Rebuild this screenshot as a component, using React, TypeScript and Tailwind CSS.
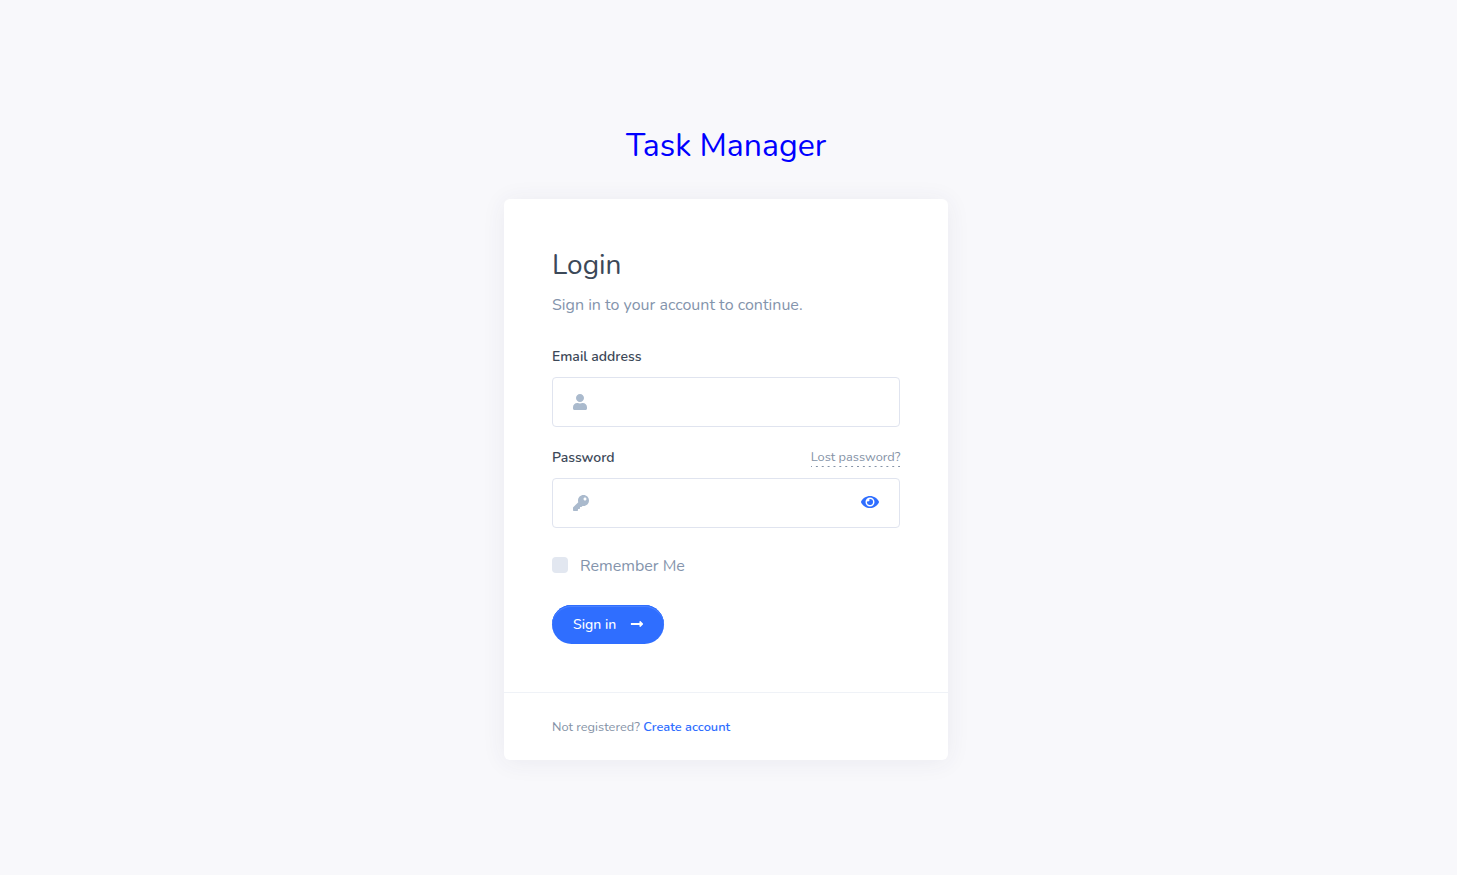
import React from "react";
import { FaUser, FaKey, FaEye, FaLongArrowAltRight } from "react-icons/fa";

export default function App() {
  return (
    <main className="flex min-h-[875px] flex-col items-center bg-[#f8f8fb] pr-[5px] pt-[120px] font-['Nunito','Lato',sans-serif] text-[#8492a6]">
      <h1 className="mt-px flex h-[50px] w-[200px] items-center whitespace-nowrap text-[32px] leading-[50px] text-[#0000ff]">
        Task Manager
      </h1>
      <section className="mt-[28px] w-[444px] rounded-md bg-white shadow-[0_2px_25px_rgba(50,50,100,0.07)]">
        <form className="flex h-[493px] flex-col px-12 pt-12" onSubmit={(e) => e.preventDefault()}>
          <h2 className="h-9 whitespace-nowrap text-[28px] leading-9 text-[#3c4858]">Login</h2>
          <p className="mt-[9px] h-[27px] whitespace-nowrap text-base leading-[27px] text-[#8494ac]">
            Sign in to your account to continue.
          </p>
          <label htmlFor="email" className="mt-[27px] h-[22px] whitespace-nowrap text-sm font-semibold leading-[22px] text-[#3c4858]">
            Email address
          </label>
          <div className="mt-[9px] flex h-[50px] items-center rounded border border-[#e0e4ef] px-5">
            <FaUser className="size-4 -ml-px shrink-0 text-[#aabacd]" />
            <input id="email" type="email" className="ml-3 min-w-0 flex-1 outline-none" />
          </div>
          <div className="mt-5 flex h-[22px] items-start justify-between">
            <label htmlFor="password" className="whitespace-nowrap text-sm font-semibold leading-[22px] text-[#3c4858]">
              Password
            </label>
            <a href="#" className="-mr-[0.45px] -mt-px h-[21px] whitespace-nowrap bg-[linear-gradient(90deg,#8492a6_36%,transparent_36%)] bg-[length:5.88px_1px] bg-[position:-1px_100%] bg-repeat-x text-[12.8px] leading-[22px]">
              Lost password?
            </a>
          </div>
          <div className="mt-[9px] flex h-[50px] items-center rounded border border-[#e0e4ef] px-5">
            <FaKey className="size-4 shrink-0 text-[#aabacd]" />
            <input id="password" type="password" className="ml-3 min-w-0 flex-1 outline-none" />
            <FaEye className="-mr-[0.4px] -mt-0.5 size-[18px] shrink-0 text-[#2f6eff]" />
          </div>
          <label className="mt-[25px] flex h-6 items-center gap-3 text-base text-[#8494ac]">
            <input type="checkbox" className="size-4 appearance-none rounded bg-[#e2e7f0] checked:bg-[#2f6eff]" />
            <span className="mt-0.5 whitespace-nowrap">Remember Me</span>
          </label>
          <button className="mt-[28px] flex h-[39px] w-28 items-center rounded-full bg-[#2f6eff] pl-[21px] text-sm font-medium text-white shadow-[inset_0_1px_0_#2f6eff,inset_0_2px_0_#4b82ff]">
            <span className="w-[57px] whitespace-nowrap text-left">Sign in</span>
            <FaLongArrowAltRight className="-mt-0.5 size-[14px]" />
          </button>
        </form>
        <footer className="h-[68px] border-t border-[#eff2f7] px-12 pt-6 text-[12.8px] leading-5">
          <span className="whitespace-nowrap">Not registered?</span>{" "}
          <a href="#" className="whitespace-nowrap font-semibold text-[#2f6eff]">Create account</a>
        </footer>
      </section>
    </main>
  );
}
